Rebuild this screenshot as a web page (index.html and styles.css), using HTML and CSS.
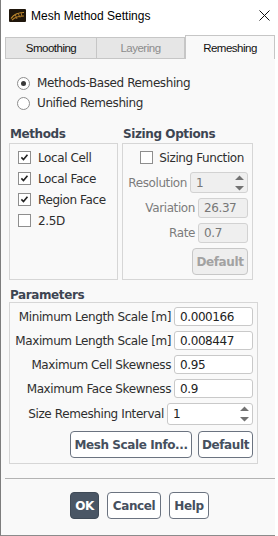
FILE: index.html
```html
<!DOCTYPE html>
<html lang="en">
<head>
    <meta charset="UTF-8">
    <meta name="viewport" content="width=device-width, initial-scale=1.0">
    <title>Mesh Method Settings</title>
    <link rel="stylesheet" href="styles.css">
</head>
<body>

    <div class="window">
        <div class="titlebar">
            <svg class="app-icon" width="17" height="13" viewBox="0 0 17 13">
                <rect width="17" height="13" rx="1" fill="#1f160b"/>
                <path d="M2 9.5 C5 5 9 3.5 15 3.5" stroke="#c8922f" stroke-width="1.2" fill="none"/>
                <path d="M3 11 C6 8 10 7 15 7" stroke="#b27d25" stroke-width="1.2" fill="none"/>
                <path d="M6 5 L8 10 M9 4 L11 8.5 M12 3.5 L13 7.5" stroke="#a8772a" stroke-width="1" fill="none"/>
            </svg>
            <span class="title">Mesh Method Settings</span>
            <svg class="close" width="11" height="11" viewBox="0 0 11 11">
                <path d="M0.5 0.5 L10.5 10.5 M10.5 0.5 L0.5 10.5" stroke="#111" stroke-width="1"/>
            </svg>
        </div>

        <div class="tabs">
            <div class="tab tab-smoothing">Smoothing</div>
            <div class="tab tab-layering disabled">Layering</div>
            <div class="tab tab-remeshing active">Remeshing</div>
        </div>

        <div class="panel">
            <div class="radios">
                <label class="radio-row"><span class="radio checked"></span>Methods-Based Remeshing</label>
                <label class="radio-row"><span class="radio"></span>Unified Remeshing</label>
            </div>

            <div class="groups">
                <div class="group methods">
                    <div class="group-title">Methods</div>
                    <div class="group-box">
                        <label class="check-row"><span class="checkbox checked"><svg viewBox="0 0 13 13"><path d="M2.8 6.4 L5.3 9 L10 3.2" /></svg></span>Local Cell</label>
                        <label class="check-row"><span class="checkbox checked"><svg viewBox="0 0 13 13"><path d="M2.8 6.4 L5.3 9 L10 3.2" /></svg></span>Local Face</label>
                        <label class="check-row"><span class="checkbox checked"><svg viewBox="0 0 13 13"><path d="M2.8 6.4 L5.3 9 L10 3.2" /></svg></span>Region Face</label>
                        <label class="check-row"><span class="checkbox"></span>2.5D</label>
                    </div>
                </div>

                <div class="group sizing">
                    <div class="group-title">Sizing Options</div>
                    <div class="group-box">
                        <label class="check-row sizing-function"><span class="checkbox"></span>Sizing Function</label>
                        <div class="field">
                            <span class="field-label muted">Resolution</span>
                            <div class="spin spin-resolution disabled">
                                <span class="spin-value">1</span>
                                <svg class="spin-arrows" width="9" height="16" viewBox="0 0 9 16"><path d="M4.5 0.5 L9 5 L0 5 Z M0 11 L9 11 L4.5 15.5 Z"/></svg>
                            </div>
                        </div>
                        <div class="field">
                            <span class="field-label muted">Variation</span>
                            <input class="text-input small" type="text" value="26.37" disabled>
                        </div>
                        <div class="field">
                            <span class="field-label muted">Rate</span>
                            <input class="text-input small" type="text" value="0.7" disabled>
                        </div>
                        <button class="btn btn-default-small" disabled>Default</button>
                    </div>
                </div>
            </div>

            <div class="group params">
                <div class="group-title">Parameters</div>
                <div class="group-box">
                    <div class="field">
                        <span class="field-label">Minimum Length Scale [m]</span>
                        <input class="text-input wide" type="text" value="0.000166">
                    </div>
                    <div class="field">
                        <span class="field-label">Maximum Length Scale [m]</span>
                        <input class="text-input wide" type="text" value="0.008447">
                    </div>
                    <div class="field">
                        <span class="field-label">Maximum Cell Skewness</span>
                        <input class="text-input wide" type="text" value="0.95">
                    </div>
                    <div class="field">
                        <span class="field-label">Maximum Face Skewness</span>
                        <input class="text-input wide" type="text" value="0.9">
                    </div>
                    <div class="field">
                        <span class="field-label">Size Remeshing Interval</span>
                        <div class="spin spin-interval">
                            <span class="spin-value">1</span>
                            <svg class="spin-arrows" width="9" height="16" viewBox="0 0 9 16"><path d="M4.5 0.5 L9 5 L0 5 Z M0 11 L9 11 L4.5 15.5 Z"/></svg>
                        </div>
                    </div>
                    <div class="field param-buttons">
                        <button class="btn btn-scale">Mesh Scale Info...</button>
                        <button class="btn btn-default">Default</button>
                    </div>
                </div>
            </div>
        </div>

        <div class="separator"></div>

        <div class="actions">
            <button class="btn btn-ok">OK</button>
            <button class="btn btn-cancel">Cancel</button>
            <button class="btn btn-help">Help</button>
        </div>
    </div>

</body>
</html>
```

FILE: styles.css
```css
body {
    margin: 0;
    background-color: #fff;
    font-family: "DejaVu Sans", sans-serif;
    font-size: 12px;
    letter-spacing: -0.4px;
    color: #2e2e2e;
}

.window {
    width: 274px;
    height: 535px;
    border-left: 1px solid #7d7d7d;
    border-bottom: 1px solid #8c8c8c;
    background-color: #f9f9f9;
    display: flex;
    flex-direction: column;
}

/* title bar */
.titlebar {
    height: 31px;
    background-color: #fff;
    display: flex;
    align-items: center;
    padding-left: 8px;
    font-family: "Liberation Sans", sans-serif;
    font-size: 12px;
    letter-spacing: 0;
    color: #000;
}

.app-icon {
    display: block;
}

.title {
    margin-left: 5px;
    padding-top: 1px;
}

.close {
    display: block;
    margin-left: auto;
    margin-right: 5px;
}

/* tabs */
.tabs {
    height: 28px;
    background-color: #fff;
    display: flex;
    align-items: flex-end;
    padding-left: 4px;
}

.tab {
    height: 22px;
    box-sizing: border-box;
    border: 1px solid #c6c6c6;
    background-color: #e6e6e6;
    display: flex;
    align-items: center;
    justify-content: center;
    font-family: "Liberation Sans", sans-serif;
    font-size: 11.5px;
    letter-spacing: -0.5px;
    color: #111;
}

.tab-smoothing {
    width: 92px;
}

.tab-layering {
    width: 89px;
    margin-left: -1px;
}

.tab.disabled {
    color: #8c8c8c;
}

.tab-remeshing {
    width: 90px;
    margin-left: 0;
}

.tab.active {
    height: 24px;
    background-color: #f9f9f9;
    border-bottom: none;
}

/* panel */
.panel {
    padding: 14px 0 0 8px;
}

.radio-row {
    height: 20px;
    display: flex;
    align-items: center;
    gap: 7px;
    padding-left: 8px;
}

.radio {
    width: 13px;
    height: 13px;
    box-sizing: border-box;
    border: 1px solid #8e8e8e;
    border-radius: 50%;
    background-color: #fff;
    display: flex;
    align-items: center;
    justify-content: center;
}

.radio.checked::after {
    content: "";
    width: 5px;
    height: 5px;
    border-radius: 50%;
    background-color: #3a3a3a;
}

.groups {
    display: flex;
    gap: 4px;
    margin-top: 14px;
}

.group-title {
    height: 14px;
    line-height: 14px;
    padding-left: 1px;
    margin-bottom: 2px;
    font-weight: bold;
    color: #3d4552;
}

.group-box {
    box-sizing: border-box;
    border: 1px solid #d6d6d6;
}

.methods {
    width: 109px;
    display: flex;
    flex-direction: column;
}

.methods .group-box {
    flex: 1;
    padding: 3px 0 0 8px;
}

.sizing {
    width: 131px;
}

.sizing .group-box {
    display: flex;
    flex-direction: column;
    align-items: flex-end;
    gap: 5px;
    padding: 4px 4px 4px 0;
}

.check-row {
    height: 21px;
    display: flex;
    align-items: center;
    gap: 7px;
}

.checkbox {
    width: 13px;
    height: 13px;
    box-sizing: border-box;
    border: 1px solid #8e8e8e;
    background-color: #fff;
}

.checkbox svg {
    display: block;
    width: 11px;
    height: 11px;
    fill: none;
    stroke: #222;
    stroke-width: 1.9;
}

.sizing-function {
    height: 19px;
    gap: 6px;
    margin-right: 4px;
}

.field {
    display: flex;
    align-items: center;
    justify-content: flex-end;
    gap: 3px;
}

.field-label {
    white-space: nowrap;
}

.muted {
    color: #7c7c7c;
}

.text-input {
    height: 19px;
    box-sizing: border-box;
    border: 1px solid #c9c9c9;
    border-radius: 3px;
    background-color: #fff;
    padding: 0 5px;
    margin: 0;
    font: inherit;
    letter-spacing: inherit;
    color: #222;
}

.text-input.small {
    width: 50px;
    height: 20px;
}

.text-input.wide {
    width: 79px;
}

.text-input:disabled {
    background-color: #efefef;
    border-color: #d2d2d2;
    color: #777;
}

.spin {
    box-sizing: border-box;
    border: 1px solid #c9c9c9;
    border-radius: 3px;
    background-color: #fff;
    display: flex;
    align-items: center;
    padding-left: 5px;
    color: #222;
}

.spin.disabled {
    background-color: #efefef;
    border-color: #d2d2d2;
    color: #777;
}

.spin-value {
    flex: 1;
}

.spin-arrows {
    display: block;
    fill: #727272;
    margin-right: 3px;
}

.spin-resolution {
    width: 58px;
    height: 21px;
}

.spin-interval {
    width: 86px;
    height: 22px;
}

.btn {
    box-sizing: border-box;
    height: 27px;
    padding: 0;
    border: 1px solid #6b7380;
    border-radius: 4px;
    background-color: #fff;
    font-family: "DejaVu Sans", sans-serif;
    font-size: 12px;
    font-weight: bold;
    letter-spacing: -0.4px;
    color: #46505e;
}

.btn:disabled {
    background-color: #eeeeee;
    border-color: #c7c7c7;
    color: #a2a2a2;
}

.btn-default-small {
    width: 56px;
}

.params {
    width: 249px;
    margin-top: 8px;
}

.params .group-title {
    margin-bottom: 0;
}

.params .group-box {
    display: flex;
    flex-direction: column;
    gap: 5px;
    padding: 4px 4px 5px 0;
}

.param-buttons {
    gap: 6px;
    margin-top: 1px;
}

.btn-scale {
    width: 122px;
}

.btn-default {
    width: 55px;
}

.separator {
    height: 1px;
    background-color: #b3b3b3;
    margin: 14px 0 0 4px;
}

.actions {
    display: flex;
    gap: 8px;
    margin-top: 13px;
    padding-left: 69px;
}

.btn-ok {
    width: 29px;
    background-color: #4a5665;
    border-color: #3f4a57;
    color: #fff;
}

.btn-cancel {
    width: 54px;
}

.btn-help {
    width: 40px;
}
```
